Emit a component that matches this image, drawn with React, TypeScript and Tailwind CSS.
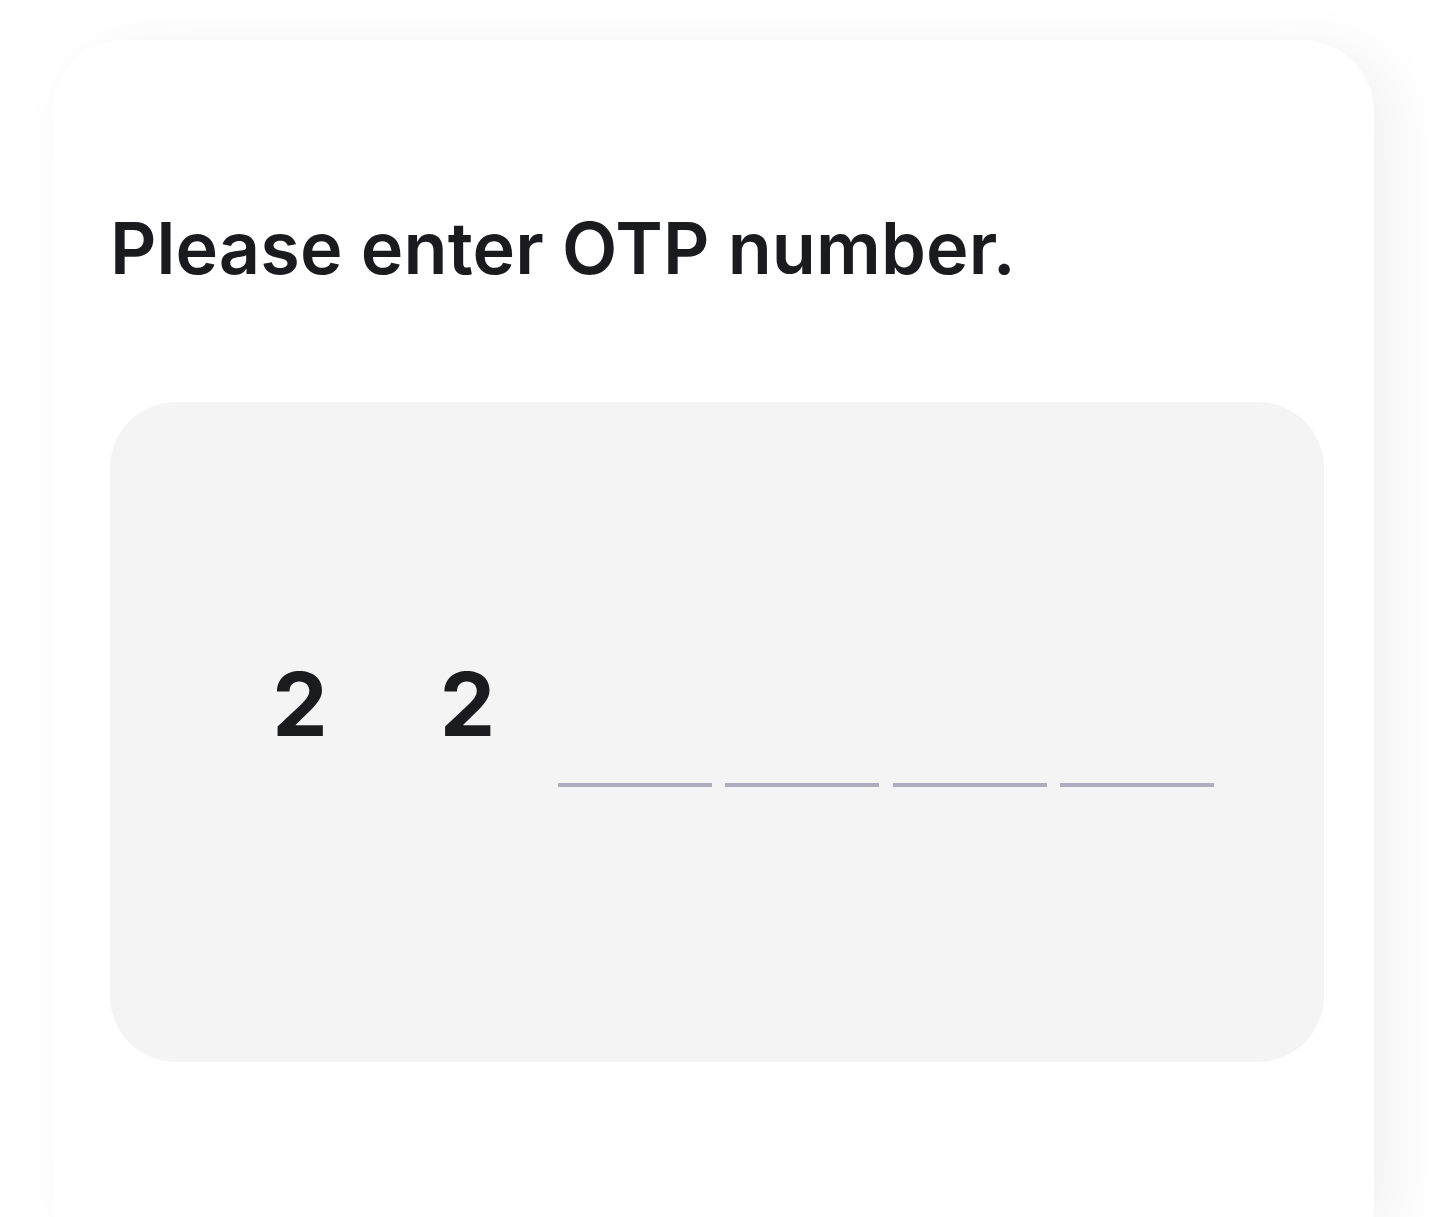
import React from "react";

export default function App() {
  const digits = ["2", "2", "", "", "", ""];
  return (
    <div className="h-[1217px] w-[1453px] overflow-hidden bg-white" style={{ fontFamily: "Inter, 'Noto Sans', sans-serif" }}>
      <div className="ml-[53px] mt-[40px] w-[1321px] h-[1177px] rounded-t-[72px] bg-white shadow-[20px_10px_60px_rgba(0,0,0,0.06)] px-[57px] pt-[165px]">
        <h1 className="text-[72px] leading-[86px] font-semibold text-[#1a1b1f] tracking-[0.1px]">
          Please enter OTP number.
        </h1>
        <div className="mt-[111px] h-[660px] w-[1214px] rounded-[66px] bg-[#f4f4f4] pt-[236px] pl-[3px] flex justify-center items-start">
          <div className="flex gap-[13.4px]">
            {digits.map((d, i) => (
              <div
                key={i}
                className={`w-[154px] h-[149px] flex justify-center border-b-4 ${d ? "border-transparent" : "border-[#aeaec0]"}`}
              >
                <span className="text-[88px] leading-[132px] font-bold text-[#1a1b1f]">{d}</span>
              </div>
            ))}
          </div>
        </div>
      </div>
    </div>
  );
}
